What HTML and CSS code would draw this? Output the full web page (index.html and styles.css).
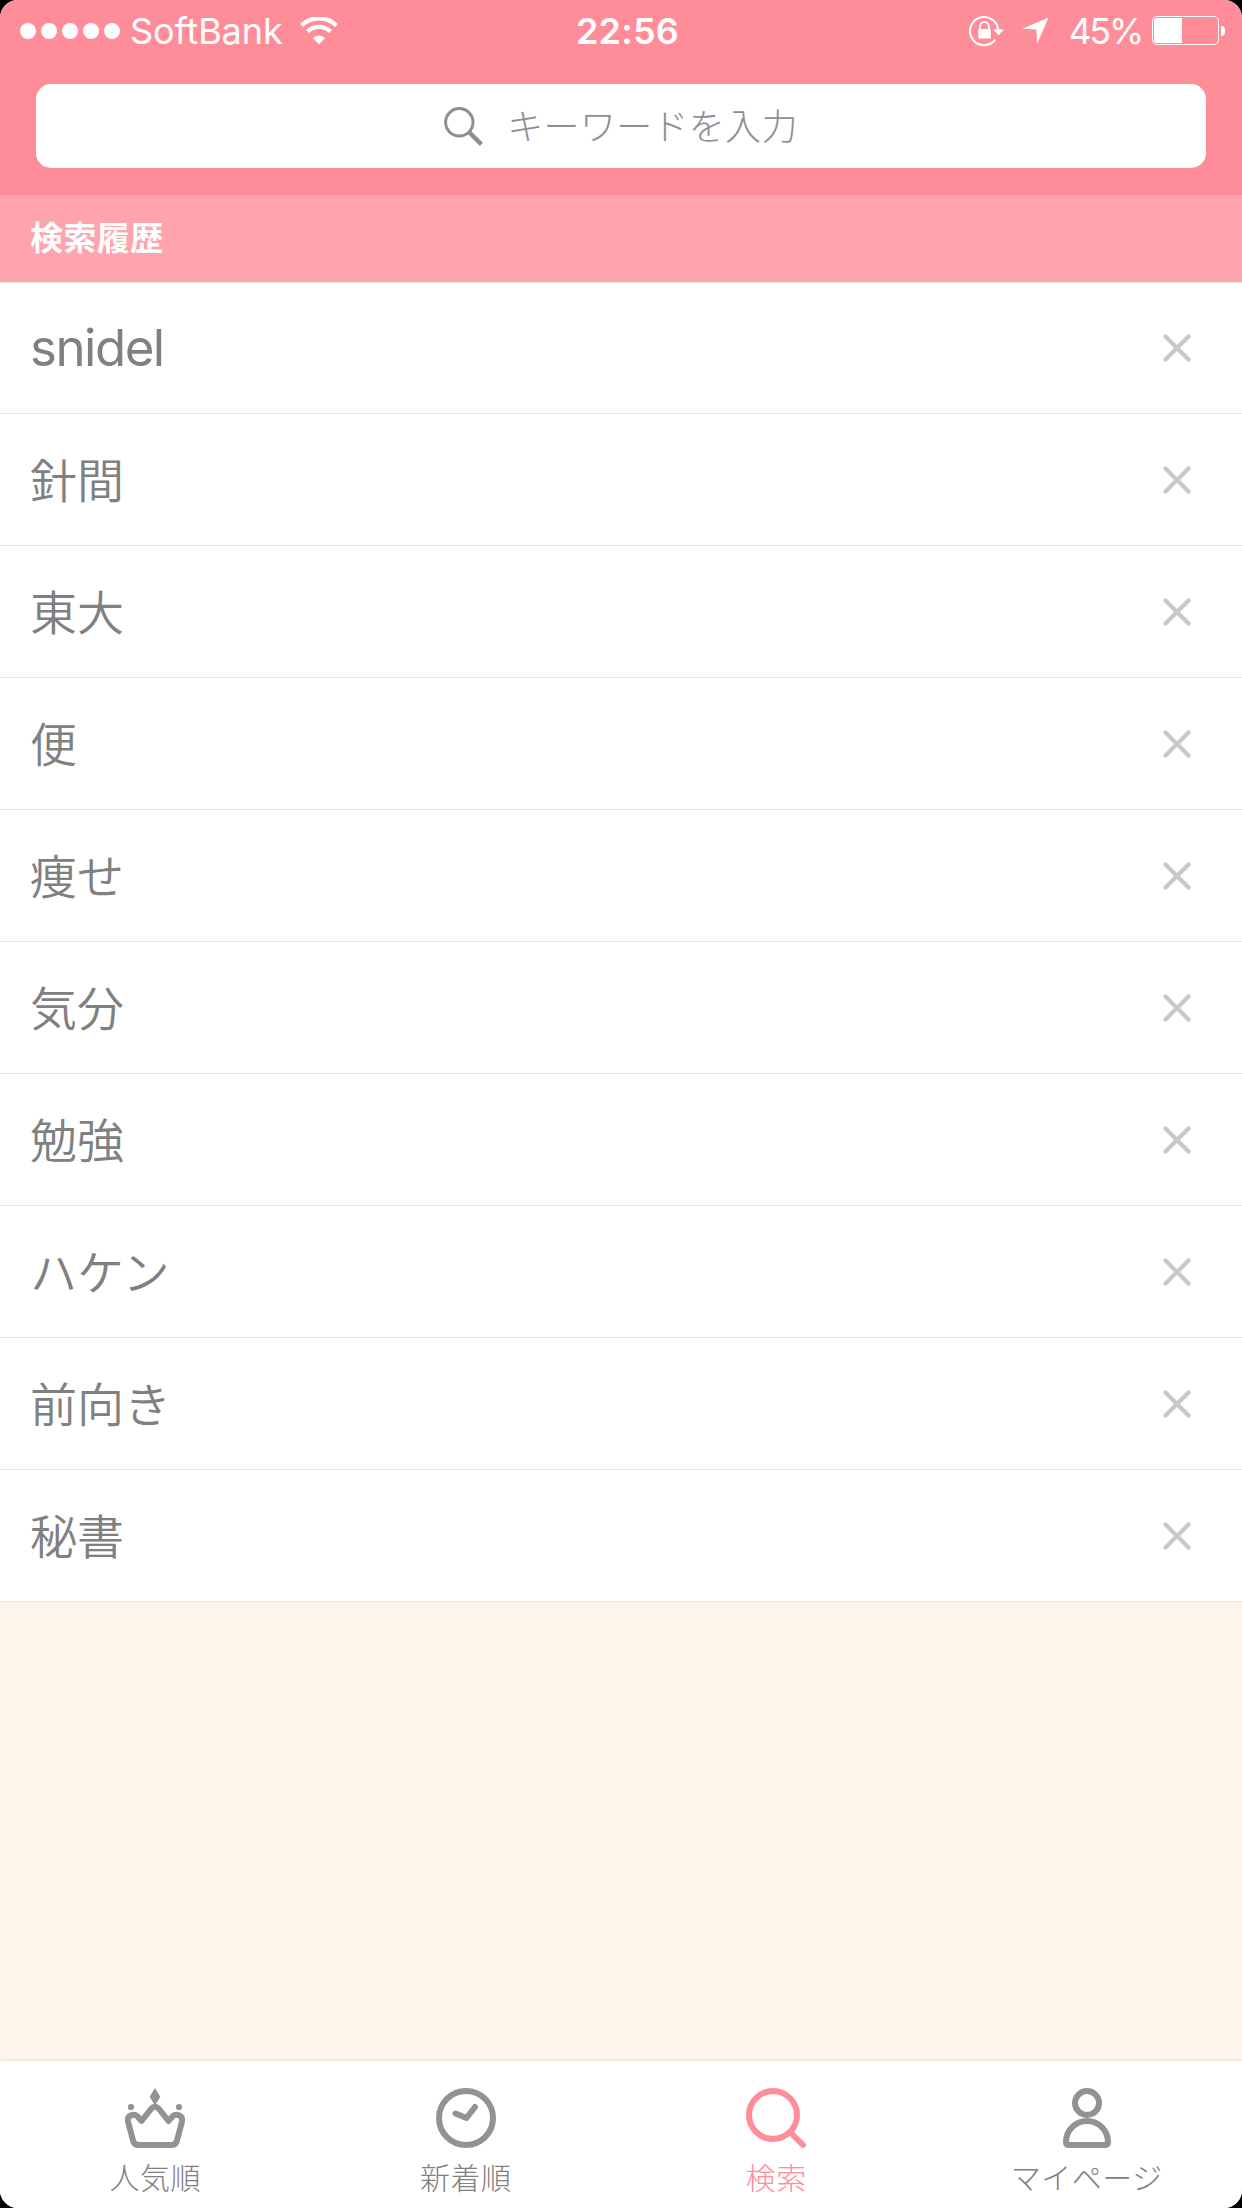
FILE: index.html
```html
<!DOCTYPE html>
<html lang="ja">

<head>
  <meta charset="UTF-8" />
  <meta name="viewport" content="width=device-width, initial-scale=1.0" />
  <title>検索</title>
  <link rel="stylesheet" href="styles.css">
</head>

<body>
  <div class="screen">
    <header class="header">
      <!-- ステータスバー -->
      <div class="status">
        <div class="status-l">
          <ul class="signal">
            <li></li>
            <li></li>
            <li></li>
            <li></li>
            <li></li>
          </ul>
          <span class="carrier">SoftBank</span>
          <svg class="wifi" viewBox="0 0 38 28">
            <path d="M1.6 8.6a24.6 24.6 0 0 1 34.8 0" />
            <path d="M7.5 14.6a16.2 16.2 0 0 1 23 0" />
            <path class="fill" d="M19 27.2L12.8 21a8.8 8.8 0 0 1 12.4 0z" />
          </svg>
        </div>
        <span class="time">22:56</span>
        <div class="status-r">
          <svg class="lock" viewBox="0 0 35 32">
            <path d="M26.3 24.7A14.1 14.1 0 1 1 29.2 15.5" />
            <path class="fill" d="M24.2 14.6h10.6l-5.3 5.6z" />
            <path d="M11.1 15v-3.6a4.4 4.4 0 0 1 8.8 0V15" />
            <rect class="fill" x="9.2" y="14" width="12.6" height="9.6" rx="1" />
          </svg>
          <svg class="location" viewBox="0 0 27 27">
            <path d="M26.6 0.4L15.2 26.6 14.4 12.6 0.4 11.8z" />
          </svg>
          <span class="percent">45%</span>
          <div class="battery">
            <i class="level" style="width: 45%"></i>
          </div>
          <i class="battery-cap"></i>
        </div>
      </div>
      <!-- 検索ボックス -->
      <div class="search">
        <svg class="search-icon" viewBox="0 0 39 39">
          <circle cx="15.3" cy="15.3" r="13.7" />
          <path class="handle" d="M25 25l12.4 12.4" />
        </svg>
        <span>キーワードを入力</span>
      </div>
    </header>

    <h2 class="title">検索履歴</h2>
    <!-- 履歴リスト -->
    <ul class="history">
      <li><span class="latin">snidel</span><svg class="close" viewBox="0 0 28 28"><path d="M2.5 2.5l23 23M25.5 2.5l-23 23" /></svg></li>
      <li><span>針間</span><svg class="close" viewBox="0 0 28 28"><path d="M2.5 2.5l23 23M25.5 2.5l-23 23" /></svg></li>
      <li><span>東大</span><svg class="close" viewBox="0 0 28 28"><path d="M2.5 2.5l23 23M25.5 2.5l-23 23" /></svg></li>
      <li><span>便</span><svg class="close" viewBox="0 0 28 28"><path d="M2.5 2.5l23 23M25.5 2.5l-23 23" /></svg></li>
      <li><span>痩せ</span><svg class="close" viewBox="0 0 28 28"><path d="M2.5 2.5l23 23M25.5 2.5l-23 23" /></svg></li>
      <li><span>気分</span><svg class="close" viewBox="0 0 28 28"><path d="M2.5 2.5l23 23M25.5 2.5l-23 23" /></svg></li>
      <li><span>勉強</span><svg class="close" viewBox="0 0 28 28"><path d="M2.5 2.5l23 23M25.5 2.5l-23 23" /></svg></li>
      <li><span>ハケン</span><svg class="close" viewBox="0 0 28 28"><path d="M2.5 2.5l23 23M25.5 2.5l-23 23" /></svg></li>
      <li><span>前向き</span><svg class="close" viewBox="0 0 28 28"><path d="M2.5 2.5l23 23M25.5 2.5l-23 23" /></svg></li>
      <li><span>秘書</span><svg class="close" viewBox="0 0 28 28"><path d="M2.5 2.5l23 23M25.5 2.5l-23 23" /></svg></li>
    </ul>

    <!-- タブバー -->
    <nav class="tabs">
      <a href="#">
        <svg class="tab-icon" viewBox="0 0 60 60">
          <path d="M13.5 57h33q4.500 0 5.500-4.500L57 33.500c1-7-7-8.500-10-4.500L43.500 33 34 21q-4-4.500-8 0L16.500 33 13 29c-3-4-11-2.500-10 4.500L8 52.500Q9 57 13.500 57z" />
          <path class="fill" d="M30 0l5.300 8.700L30 17.500l-5.300-8.800z" />
          <circle class="fill" cx="6" cy="19" r="3.100" />
          <circle class="fill" cx="54" cy="19" r="3.100" />
        </svg>
        <span>人気順</span>
      </a>
      <a href="#">
        <svg class="tab-icon" viewBox="0 0 60 60">
          <circle cx="30" cy="30" r="27" />
          <path d="M19.500 25.500l11 4.500L39 19" />
        </svg>
        <span>新着順</span>
      </a>
      <a href="#" class="current">
        <svg class="tab-icon" viewBox="0 0 60 60">
          <circle cx="27" cy="27" r="24" />
          <path d="M45.500 45.500L57 57" />
        </svg>
        <span>検索</span>
      </a>
      <a href="#">
        <svg class="tab-icon" viewBox="0 0 60 60">
          <circle cx="30" cy="15" r="12" />
          <path d="M9 54a21 21 0 0 1 42 0q0 3-3 3H12q-3 0-3-3z" />
        </svg>
        <span>マイページ</span>
      </a>
    </nav>
  </div>
</body>

</html>
```
FILE: styles.css
```css
* {
  margin: 0;
  padding: 0;
  box-sizing: border-box;
}

body {
  background: #000;
  font-family: Inter, "Noto Sans CJK JP", sans-serif;
}

ul {
  list-style: none;
}

a {
  text-decoration: none;
}

svg {
  display: block;
  flex: none;
  fill: none;
}

.screen {
  display: flex;
  flex-direction: column;
  width: 1242px;
  height: 2208px;
  border-radius: 18px;
  background: #fdf4ea;
  overflow: hidden;
}

.header {
  height: 195px;
  background: #ff8d99;
}

/* ステータスバー */
.status {
  display: grid;
  grid-template-columns: 1fr auto 1fr;
  align-items: center;
  height: 60px;
  padding: 1px 17px 0 20px;
  margin-bottom: 24px;
  color: #fff;
}

.status-l,
.status-r {
  display: flex;
  align-items: center;
}

.status-r {
  justify-content: flex-end;
}

.signal {
  display: flex;
  gap: 5px;
  margin-right: 10px;
}

.signal li {
  width: 16px;
  height: 16px;
  border-radius: 50%;
  background: #fff;
}

.carrier {
  padding-top: 1px;
  font-size: 36px;
  letter-spacing: -0.1px;
}

.wifi {
  width: 38px;
  height: 28px;
  margin-left: 17px;
  stroke: #fff;
  stroke-width: 4.2;
}

.fill {
  stroke: none;
}

.status .fill {
  fill: #fff;
}

.time {
  padding: 1px 0 0 10px;
  font-size: 36px;
  font-weight: 600;
  letter-spacing: 0.2px;
}

.lock {
  width: 35px;
  height: 32px;
  stroke: #fff;
  stroke-width: 2;
}

.location {
  width: 27px;
  height: 27px;
  margin: 0 19px 0 18px;
  fill: #fff;
}

.percent {
  padding-top: 1px;
  font-size: 36px;
  letter-spacing: -2.3px;
}

.battery {
  width: 67px;
  height: 29px;
  padding: 1px;
  margin-left: 10px;
  border: 1px solid #fff;
  border-radius: 5px;
}

.level {
  display: block;
  height: 100%;
  border-radius: 3px 0 0 3px;
  background: #fff;
}

.battery-cap {
  width: 4px;
  height: 10px;
  margin-left: 2px;
  border-radius: 0 5px 5px 0;
  background: #fff;
}

/* 検索ボックス */
.search {
  display: flex;
  align-items: center;
  justify-content: center;
  height: 84px;
  margin: 0 36px;
  border-radius: 15px;
  background: #fff;
  color: #8e8e93;
  font-size: 36px;
  font-weight: 300;
  letter-spacing: 0.3px;
}

.search span {
  padding-bottom: 5px;
}

.search-icon {
  width: 39px;
  height: 39px;
  margin-right: 24px;
  stroke: #8e8e93;
  stroke-width: 3;
}

.search-icon .handle {
  stroke-width: 4.5;
}

.title {
  height: 88px;
  padding-left: 30px;
  border-bottom: 1px solid #e8e6df;
  background: #ffa3ae;
  color: #fff;
  font-size: 33px;
  letter-spacing: 0.4px;
  line-height: 86px;
}

/* 履歴リスト */
.history {
  background: #fff;
}

.history li {
  display: flex;
  align-items: center;
  justify-content: space-between;
  height: 132px;
  padding: 0 51px 0 30px;
  border-bottom: 1px solid #e8e6df;
  color: #808080;
  font-size: 47px;
  font-weight: 350;
}

.history li:first-child {
  height: 131px;
}

.history span {
  padding-bottom: 4px;
}

.history .latin {
  padding-bottom: 2px;
  font-size: 51px;
  font-weight: 400;
  letter-spacing: -1.5px;
}

.close {
  width: 28px;
  height: 28px;
  stroke: #c7c7cc;
  stroke-width: 4.2;
  stroke-linecap: round;
}

/* タブバー */
.tabs {
  display: flex;
  height: 147px;
  margin-top: auto;
  background: #fff;
  box-shadow: 0 -1px 3px #e6dfd2;
}

.tabs a {
  display: flex;
  flex: 1;
  flex-direction: column;
  align-items: center;
  padding-top: 27px;
  color: #808080;
  font-size: 30px;
  font-weight: 300;
  letter-spacing: 0.5px;
  line-height: 40px;
}

.tabs span {
  margin-top: 10px;
}

.tab-icon {
  width: 60px;
  height: 60px;
  stroke: #929292;
  stroke-width: 6;
  stroke-linecap: round;
  stroke-linejoin: round;
}

.tab-icon .fill {
  fill: #929292;
}

.tabs .current {
  color: #ff8d99;
}

.current .tab-icon {
  stroke: #ff8d99;
}
```
